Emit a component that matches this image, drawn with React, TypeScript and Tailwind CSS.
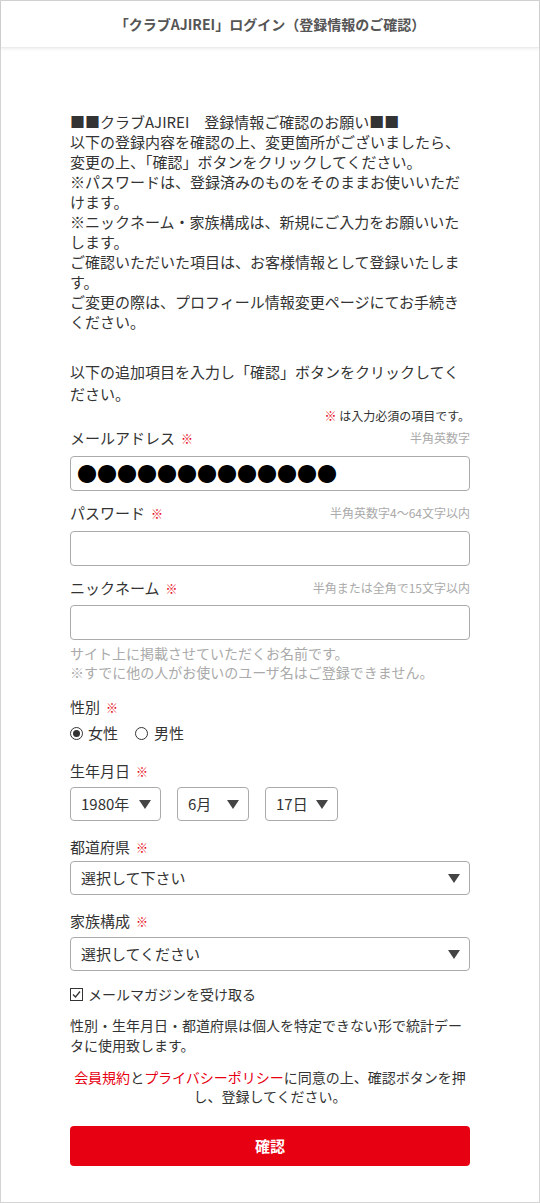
import React from "react";

const font = {
  fontFamily: '"Noto Sans CJK JP", "Noto Sans", sans-serif',
};

function Req() {
  return <span className="ml-[6px] text-[12px] text-[#e60012]">※</span>;
}

function FieldLabel({ label, hint }: { label: string; hint?: string }) {
  return (
    <div className="flex items-end justify-between">
      <span className="text-[15px] leading-[20px]">
        {label}
        <Req />
      </span>
      {hint && <span className="pb-[3px] text-[12px] leading-[16px] text-[#aaa]">{hint}</span>}
    </div>
  );
}

function Arrow() {
  return (
    <svg width="12" height="9" viewBox="0 0 12 9" className="shrink-0">
      <path d="M0 0 H12 L6 9 Z" fill="#444" />
    </svg>
  );
}

function SelectBox({ value, className }: { value: string; className: string }) {
  return (
    <div
      className={`flex items-center justify-between rounded-[4px] border border-[#aaa] bg-white pl-[10px] pr-[9px] text-[15px] ${className}`}
    >
      <span>{value}</span>
      <Arrow />
    </div>
  );
}

export default function App() {
  return (
    <div
      style={font}
      className="h-[1203px] w-[540px] border border-[#d3d3d3] bg-white text-[#333]"
    >
      <header className="flex h-[47px] items-center justify-center border-b border-[#ececec] text-[14px] font-bold text-[#555] shadow-[0_1px_3px_rgba(0,0,0,0.08)]">
        「クラブAJIREI」ログイン（登録情報のご確認）
      </header>

      <main className="mx-auto w-[400px]">
        <p className="mt-[64px] text-[15px] leading-[20px]">
          ■■クラブAJIREI　登録情報ご確認のお願い■■
          <br />
          以下の登録内容を確認の上、変更箇所がございましたら、変更の上、「確認」ボタンをクリックしてください。
          <br />
          ※パスワードは、登録済みのものをそのままお使いいただけます。
          <br />
          ※ニックネーム・家族構成は、新規にご入力をお願いいたします。
          <br />
          ご確認いただいた項目は、お客様情報として登録いたします。
          <br />
          ご変更の際は、プロフィール情報変更ページにてお手続きください。
        </p>

        <p className="mt-[29px] text-[15px] leading-[22px]">
          以下の追加項目を入力し「確認」ボタンをクリックしてください。
        </p>

        <p className="mt-[3px] text-right text-[12px] leading-[16px]">
          <span className="text-[#e60012]">※</span> は入力必須の項目です。
        </p>

        <div className="mt-[4px]">
          <FieldLabel label="メールアドレス" hint="半角英数字" />
          <div className="mt-[7px] flex h-[35px] items-center rounded-[4px] border border-[#aaa] pl-[6px] text-[20px] leading-none text-black">
            ●●●●●●●●●●●●●
          </div>
        </div>

        <div className="mt-[12px]">
          <FieldLabel label="パスワード" hint="半角英数字4〜64文字以内" />
          <div className="mt-[7px] h-[35px] rounded-[4px] border border-[#aaa]" />
        </div>

        <div className="mt-[12px]">
          <FieldLabel label="ニックネーム" hint="半角または全角で15文字以内" />
          <div className="mt-[6px] h-[35px] rounded-[4px] border border-[#aaa]" />
          <p className="mt-[4px] text-[14px] leading-[19px] text-[#aaa]">
            サイト上に掲載させていただくお名前です。
            <br />
            ※すでに他の人がお使いのユーザ名はご登録できません。
          </p>
        </div>

        <div className="mt-[15px]">
          <FieldLabel label="性別" />
          <div className="mt-[5px] flex items-center text-[15px] leading-[20px]">
            <span className="mr-[5px] flex h-[13px] w-[13px] items-center justify-center rounded-full border border-[#333]">
              <span className="h-[7px] w-[7px] rounded-full bg-[#333]" />
            </span>
            <span>女性</span>
            <span className="ml-[17px] mr-[6px] h-[13px] w-[13px] rounded-full border border-[#333]" />
            <span>男性</span>
          </div>
        </div>

        <div className="mt-[18px]">
          <FieldLabel label="生年月日" />
          <div className="mt-[5px] flex gap-[16px]">
            <SelectBox value="1980年" className="h-[34px] w-[91px]" />
            <SelectBox value="6月" className="h-[34px] w-[72px]" />
            <SelectBox value="17日" className="h-[34px] w-[73px]" />
          </div>
        </div>

        <div className="mt-[16px]">
          <FieldLabel label="都道府県" />
          <SelectBox value="選択して下さい" className="mt-[3px] h-[34px] w-full" />
        </div>

        <div className="mt-[16px]">
          <FieldLabel label="家族構成" />
          <SelectBox value="選択してください" className="mt-[5px] h-[34px] w-full" />
        </div>

        <div className="mt-[13px] flex items-center text-[14px] leading-[20px]">
          <svg width="13" height="13" viewBox="0 0 13 13" className="mr-[5px]">
            <rect x="0.5" y="0.5" width="12" height="12" fill="white" stroke="#333" />
            <path d="M3 6.5 L5.5 9 L10 3.5" fill="none" stroke="#333" strokeWidth="1.3" />
          </svg>
          メールマガジンを受け取る
        </div>

        <p className="mt-[11px] text-[14px] leading-[20px]">
          性別・生年月日・都道府県は個人を特定できない形で統計データに使用致します。
        </p>

        <p className="mt-[13px] text-center text-[14px] leading-[19px]">
          <span className="text-[#e60012]">会員規約</span>と<span className="text-[#e60012]">プライバシーポリシー</span>に同意の上、確認ボタンを押し、登録してください。
        </p>

        <button className="mt-[20px] flex h-[40px] w-full items-center justify-center rounded-[4px] bg-[#e60012] text-[15px] font-bold text-white">
          確認
        </button>
      </main>
    </div>
  );
}
